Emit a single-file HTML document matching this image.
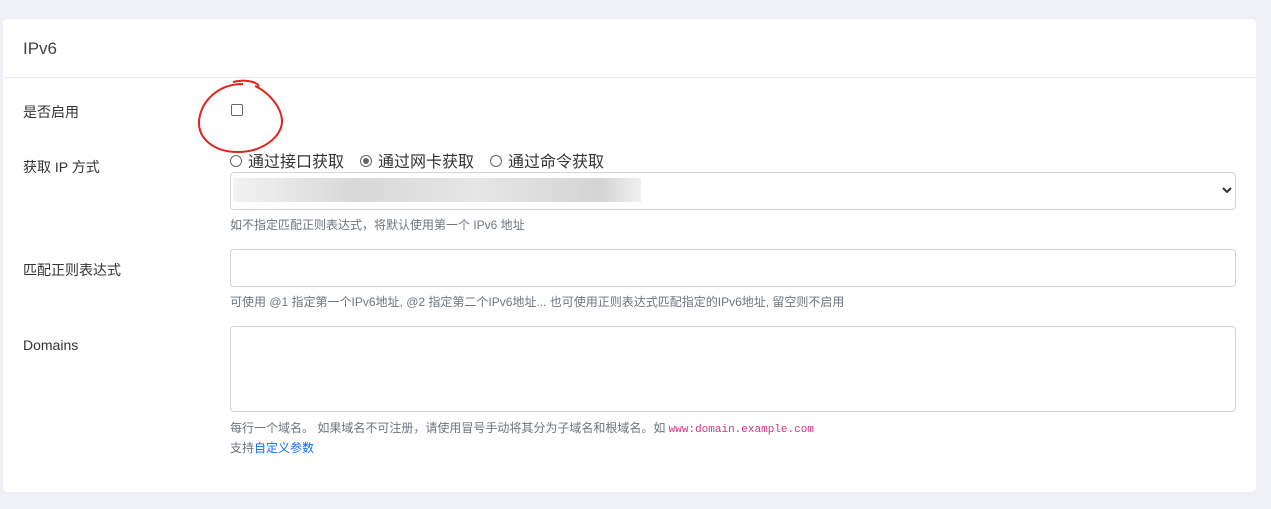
<!DOCTYPE html>
<html><head><meta charset="utf-8"><style>
body{margin:0;width:1271px;height:509px;background:#eef0f5;font-family:"Liberation Sans","Noto Sans CJK SC",sans-serif;position:relative;overflow:hidden;color:#333}
.card{position:absolute;left:3px;top:19px;width:1253px;height:473px;background:#fff;border-radius:4px}
.a{position:absolute;white-space:nowrap}
.lbl{font-size:14px;color:#333}
.hint{font-size:12px;color:#6c757d}
.box{position:absolute;border:1px solid #ced4da;border-radius:4px;background:#fff;box-sizing:border-box}
.radio{display:inline-block;width:12px;height:12px;border:1px solid #666;border-radius:50%;box-sizing:border-box;vertical-align:0px;margin-right:6px;position:relative}
.r2{margin-left:16px}
</style></head><body>
<div class="card">
<div class="a" style="left:20px;top:20px;font-size:17px;color:#444">IPv6</div>
<div style="position:absolute;left:0;right:0;top:58px;border-top:1px solid #e6e8eb"></div>
<div class="a lbl" style="left:20px;top:83px">是否启用</div>
<div class="a" style="left:228px;top:85px;width:12px;height:12px;border:1px solid #666;border-radius:2px;box-sizing:border-box"></div>
<svg class="a" style="left:190px;top:57px" width="95" height="80"><path d="M40 6 C55 2 70 8 64 12 M50 8 C25 8 8 25 6 45 C5 62 20 76 45 76 C70 76 90 60 89 44 C88 30 75 16 62 10" fill="none" stroke="#e0241d" stroke-width="2"/></svg>
<div class="a lbl" style="left:20px;top:138px">获取 IP 方式</div>
<div class="a" style="left:227px;top:129px;font-size:16px;color:#333"><span class="radio"></span>通过接口获取<span class="radio r2"><span style="position:absolute;left:2px;top:2px;width:6px;height:6px;border-radius:50%;background:#666"></span></span>通过网卡获取<span class="radio r2"></span>通过命令获取</div>
<div class="box" style="left:227px;top:153px;width:1006px;height:38px"></div>
<div class="a" style="left:230px;top:159px;width:408px;height:24px;background:linear-gradient(90deg,#f2f2f2,#d8d8d8 30%,#e6e6e6 60%,#d4d4d4 90%,#f0f0f0)"></div>
<svg class="a" style="left:1219px;top:167px" width="10" height="8"><path d="M1 2 L5 6 L9 2" fill="none" stroke="#333" stroke-width="2"/></svg>
<div class="a hint" style="left:227px;top:197px">如不指定匹配正则表达式，将默认使用第一个 IPv6 地址</div>
<div class="a lbl" style="left:20px;top:241px">匹配正则表达式</div>
<div class="box" style="left:227px;top:230px;width:1006px;height:38px"></div>
<div class="a hint" style="left:227px;top:274px">可使用 @1 指定第一个IPv6地址, @2 指定第二个IPv6地址... 也可使用正则表达式匹配指定的IPv6地址, 留空则不启用</div>
<div class="a lbl" style="left:20px;top:318px">Domains</div>
<div class="box" style="left:227px;top:307px;width:1006px;height:86px"></div>
<div class="a hint" style="left:227px;top:400px">每行一个域名。 如果域名不可注册，请使用冒号手动将其分为子域名和根域名。如 <span style="font-family:'Liberation Mono',monospace;color:#d63384;font-size:11px">www:domain.example.com</span></div>
<div class="a hint" style="left:227px;top:420px">支持<span style="color:#0d6efd">自定义参数</span></div>
</div>
</body></html>
